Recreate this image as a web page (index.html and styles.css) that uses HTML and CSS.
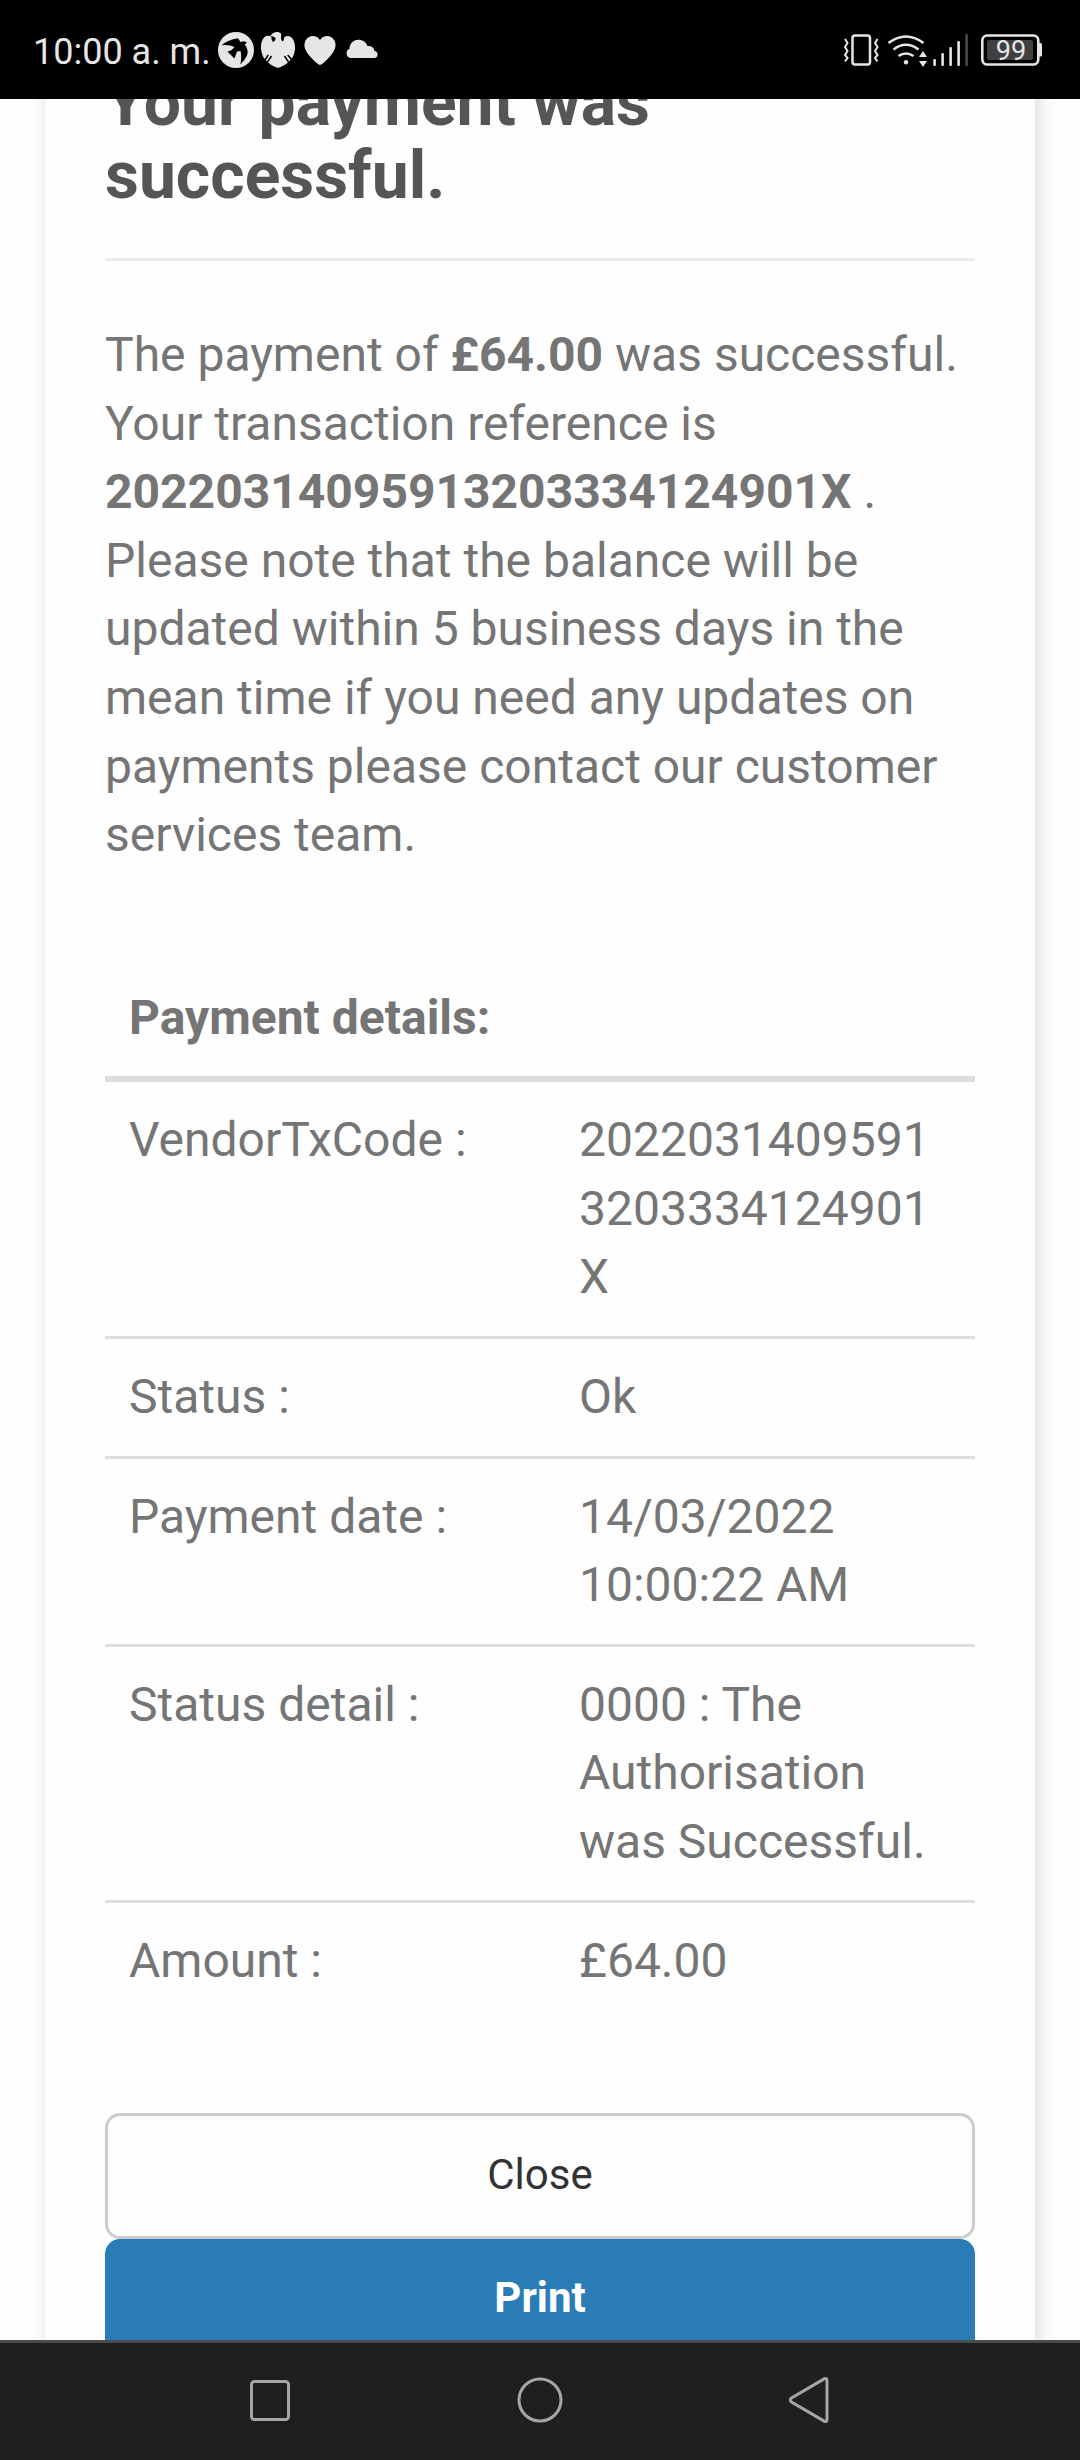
FILE: index.html
```html
<!DOCTYPE html>
<html lang="en">
<head>
    <meta charset="UTF-8">
    <meta name="viewport" content="width=device-width, initial-scale=1.0">
    <title>Payment successful</title>
    <link rel="stylesheet" href="styles.css">
</head>
<body>
    <header class="status-bar">
      <span class="clock">10:00 a. m.</span>
      <div class="notifications">
        <svg width="36" height="36" viewBox="218 31 36 36">
          <circle cx="236" cy="49" r="18" fill="#e6e6e6"/>
          <path d="M221.500 44.300Q228 39 238 37.300L240.500 41L244 40.300L247 41.500L244.800 43.500Q249 49 247 54.500Q245 59 240.300 63.500Q242 56 240.500 50L237 50.500L234.500 57.500L227.500 50.500Q231.500 50 234.500 46Q229 43.200 221.500 44.300Z" fill="#000"/>
        </svg>
        <svg width="36" height="36" viewBox="260 31 36 36">
          <path d="M270 35.500Q273 30.500 278 31Q281.500 31.500 281.200 35Q280.500 39 282.500 40.500Q284.500 39.500 284 36.500Q287 34 291 36Q295.500 40 295 48Q294 56 290 59.500Q286 64 278 67Q270 64 266 59.500Q262 56 261 48Q260.500 40 264.500 36Q268 33.500 271.500 36Q271 39.500 273 41Q276 40 275.500 37Q273 34.500 270 35.500Z" fill="#e6e6e6"/>
          <path d="M268.300 54L265 59M271.500 55L267.500 61M284.500 55L288.500 61M287.700 54L291.500 58.500" stroke="#000" stroke-width="1.500" fill="none"/>
        </svg>
        <svg width="36" height="36" viewBox="302 31 36 36">
          <path d="M320 64Q317 63 311 56.500C303 48 304 43 305.500 39.500C308 34 316.500 33 320 39C323.500 33 332 34 334.500 39.500C336 43 337 48 329 56.500Q323 63 320 64Z" fill="#e6e6e6"/>
        </svg>
        <svg width="36" height="36" viewBox="344 31 36 36">
          <path d="M350 57A5 5 0 0 1 349.500 47.700C350 36.500 364.500 36 367.500 45Q373.500 44.500 374.500 50A3.600 3.600 0 0 1 375 57Z" fill="#e6e6e6"/>
        </svg>
      </div>
      <div class="indicators">
        <svg width="200" height="36" viewBox="842 31 200 36" fill="none" stroke="#e6e6e6">
          <rect x="852.500" y="34.500" width="17.500" height="29" rx="2.500" stroke-width="2.500"/>
          <path d="M845 38L847.500 42L845 46L847.500 50L845 54L847.500 57L845 60.500M877.500 38L875 42L877.500 46L875 50L877.500 54L875 57L877.500 60.500" stroke-width="2"/>
          <path d="M888.500 42Q906 29 923.500 42M893.500 48.500Q906 39 918.500 48.500M898.500 55Q906 50 913.500 55" stroke-width="2.600"/>
          <g fill="#e6e6e6" stroke="none">
            <circle cx="906" cy="61.200" r="2.200"/>
            <path d="M923 50L927 56H919ZM923 66L919 60H927Z"/>
            <rect x="933.300" y="58" width="2.600" height="7" rx="1"/>
            <rect x="941.300" y="52" width="2.600" height="13" rx="1"/>
            <rect x="949.300" y="46" width="2.600" height="19" rx="1"/>
            <rect x="957.300" y="40" width="2.600" height="25" rx="1"/>
            <rect x="965.300" y="33" width="2.600" height="32" rx="1" fill="#4a4a4a"/>
            <path d="M1039 42H1040.500Q1042 42 1042 43.500V54Q1042 55.500 1040.500 55.500H1039Z"/>
            <rect x="987" y="39" width="46" height="20" rx="2" fill="#404040"/>
          </g>
          <rect x="982.300" y="34.500" width="56" height="29" rx="5" stroke-width="2.600"/>
          <text class="battery-level" x="1011" y="58.700" text-anchor="middle">99</text>
        </svg>
      </div>
    </header>

    <main class="page">
      <div class="card">
        <h1>Your payment was successful.</h1>
        <hr>
        <p class="content">The payment of <b>£64.00</b> was successful. Your transaction reference is <b>20220314095913203334124901X</b> . Please note that the balance will be updated within 5 business days in the mean time if you need any updates on payments please contact our customer services team.</p>

        <table class="details">
          <colgroup>
            <col class="label-col">
            <col>
          </colgroup>
          <thead>
            <tr><th colspan="2">Payment details:</th></tr>
          </thead>
          <tbody>
            <tr>
              <td>VendorTxCode :</td>
              <td class="code">20220314095913203334124901X</td>
            </tr>
            <tr>
              <td>Status :</td>
              <td>Ok</td>
            </tr>
            <tr>
              <td>Payment date :</td>
              <td>14/03/2022 10:00:22 AM</td>
            </tr>
            <tr>
              <td>Status detail :</td>
              <td>0000 : The Authorisation was Successful.</td>
            </tr>
            <tr>
              <td>Amount :</td>
              <td>£64.00</td>
            </tr>
          </tbody>
        </table>

        <button class="btn">Close</button>
        <button class="btn btn-primary">Print</button>
      </div>
    </main>

    <nav class="nav-bar">
      <svg width="48" height="48" viewBox="0 0 48 48">
        <rect x="5.500" y="5.500" width="37" height="38" rx="3"/>
      </svg>
      <svg width="48" height="48" viewBox="0 0 48 48">
        <circle cx="24" cy="24" r="21"/>
      </svg>
      <svg width="48" height="48" viewBox="0 0 48 48">
        <path d="M38.500 2.700Q41 1.700 41 4.500V43.500Q41 46.300 38.500 45.300L5.500 26Q3 24 5.500 22Z"/>
      </svg>
    </nav>
</body>
</html>
```
FILE: styles.css
```css
* {
  box-sizing: border-box;
}
body {
  display: flex;
  flex-direction: column;
  height: 2460px;
  margin: 0;
  overflow: hidden;
  background: #fefefe;
  color: #757575;
  font-family: Roboto, sans-serif;
  font-size: 48px;
  line-height: 1.42857;
}
.status-bar {
  display: flex;
  align-items: center;
  flex: none;
  height: 99px;
  padding: 0 38px 0 33px;
  background: #000;
  color: #e6e6e6;
}
.status-bar svg {
  display: block;
}
.clock {
  width: 185px;
  padding-top: 5px;
  font-size: 36px;
  line-height: 42px;
  white-space: nowrap;
}
.notifications {
  display: flex;
  gap: 6px;
}
.indicators {
  margin-left: auto;
}
.battery-level {
  fill: #e6e6e6;
  stroke: none;
  font-size: 27px;
}
.page {
  flex: 1;
  min-height: 0;
  padding: 0 45px;
  overflow: hidden;
}
.card {
  height: 2400px;
  margin-top: -32px;
  padding: 0 60px;
  background: #fefefe;
  box-shadow: 3px 0 18px rgba(0, 0, 0, 0.14);
}
h1 {
  margin: 0;
  color: #555;
  font-size: 66px;
  line-height: 1.1;
}
hr {
  margin: 46px 0 60px;
  border: 0;
  border-top: 3px solid #ebebeb;
}
.content {
  margin: 0 0 90px;
}
.details {
  width: 100%;
  margin-bottom: 93px;
  border-collapse: collapse;
  table-layout: fixed;
}
.label-col {
  width: 450px;
}
th, td {
  padding: 24px;
  text-align: left;
  vertical-align: top;
}
th {
  border-bottom: 6px solid #ddd;
}
td {
  border-top: 3px solid #ddd;
}
.code {
  word-break: break-all;
}
.btn {
  display: block;
  width: 100%;
  height: 126px;
  padding: 0 0 2px;
  border: 3px solid #ccc;
  border-radius: 15px;
  background: #fefefe;
  color: #333;
  font-family: inherit;
  font-size: 42px;
}
.btn-primary {
  height: 120px;
  border: 0;
  background: #2a7cb6;
  color: #fff;
  font-weight: bold;
}
.nav-bar {
  display: flex;
  align-items: center;
  justify-content: center;
  gap: 222px;
  flex: none;
  height: 120px;
  padding-bottom: 3px;
  border-top: 3px solid #4a4a4a;
  background: #1f1f1f;
}
.nav-bar svg {
  fill: none;
  stroke: #a6a6a6;
  stroke-width: 3;
}
```
